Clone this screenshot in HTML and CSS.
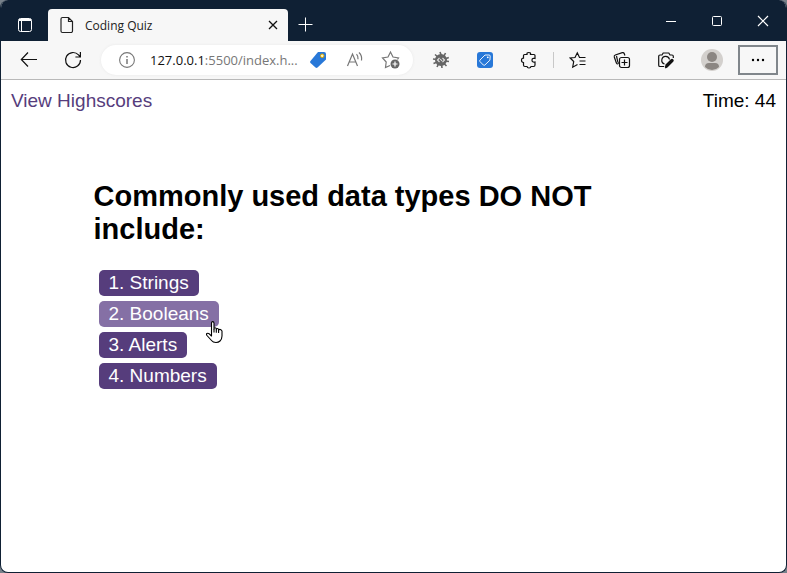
FILE: index.html
```html
<!DOCTYPE html>
<html lang="en">
<head>
<meta charset="utf-8">
<title>Coding Quiz</title>
<link rel="stylesheet" href="styles.css">
</head>
<body>
<div class="window">
  <header class="titlebar">
    <button class="workspace" aria-label="Tab actions">
      <svg width="16" height="16" viewBox="0 0 16 16" fill="none" stroke="#fff"><rect x="1.5" y="1.5" width="13" height="13" rx="2"/><path d="M2 3.5h12M2 2.500h12M4.500 4v10"/></svg>
    </button>
    <div class="tab">
      <svg width="14" height="18" viewBox="0 0 14 18" fill="none" stroke="#222" stroke-width="1.200"><path d="M2.500 1.500h6l4 4v9.500a1.500 1.500 0 0 1-1.500 1.500h-8.500a1.500 1.500 0 0 1-1.500-1.500v-12a1.500 1.500 0 0 1 1.500-1.500zM8.500 1.500v4h4"/></svg>
      <span class="tab-title">Coding Quiz</span>
      <button class="tab-close" aria-label="Close tab">
        <svg width="10" height="10" viewBox="0 0 10 10" stroke="#111" stroke-width="1.300"><path d="M1 1l8 8M9 1l-8 8"/></svg>
      </button>
    </div>
    <button class="new-tab" aria-label="New tab">
      <svg width="16" height="16" viewBox="0 0 16 16" stroke="#fff"><path d="M7.500 0.500v14M0.500 7.500h14"/></svg>
    </button>
    <div class="window-controls">
      <button aria-label="Minimize"><svg width="12" height="12" viewBox="0 0 12 12" stroke="#fff"><path d="M1 6.500h10"/></svg></button>
      <button aria-label="Maximize"><svg width="12" height="12" viewBox="0 0 12 12" fill="none" stroke="#fff"><rect x="1.500" y="1.500" width="9" height="9" rx="1"/></svg></button>
      <button aria-label="Close"><svg width="12" height="12" viewBox="0 0 12 12" stroke="#fff" stroke-width="1.200"><path d="M1 1l10 10M11 1l-10 10"/></svg></button>
    </div>
  </header>

  <nav class="toolbar">
    <button class="tool" aria-label="Back"><svg width="20" height="20" viewBox="0 0 20 20" fill="none" stroke="#111" stroke-width="1.200"><path d="M18 9.500H2.500M9 2.500L2.300 9.500L9 16.500"/></svg></button>
    <button class="tool" aria-label="Refresh"><svg width="20" height="20" viewBox="0 0 20 20" fill="none" stroke="#111" stroke-width="1.200"><path d="M17.500 10a7.500 7.500 0 1 1-2-5.100l1.500 1.600M17.400 2v5h-5"/></svg></button>
    <div class="address">
      <svg class="info" width="18" height="18" viewBox="0 0 18 18" fill="none" stroke="#777" stroke-width="1.100"><circle cx="9" cy="9" r="7.400"/><path d="M9 8v5M9 5v1.500" stroke-width="1.500"/></svg>
      <span class="url"><b>127.0.0.1</b>:5500/index.h...</span>
      <button class="tool address-tool" aria-label="Shopping"><svg width="18" height="18" viewBox="1 0 18 18"><path d="M10 1h6a2 2 0 0 1 2 2v5.500l-8.500 8q-1 .8-2 0L2.500 12q-.8-1 0-2z" fill="#2878d8" transform="translate(-1)"/><circle cx="13.200" cy="4.800" r="1.800" fill="#fff4bb" stroke="#d9a300"/></svg></button>
      <button class="tool address-tool" aria-label="Read aloud"><svg width="18" height="18" viewBox="0 0 18 18" fill="none" stroke="#777" stroke-width="1.200"><path d="M1.500 15L6.500 3l5 12M3.300 11h6.500M10.500 3.200q1.800 1.800 1.500 5M13 1.500q3.300 3.200 2.500 8"/></svg></button>
      <button class="tool address-tool" aria-label="Add to favorites"><svg width="20" height="20" viewBox="0 0 20 20" fill="none" stroke="#777" stroke-width="1.200"><path d="M9 15.500L4.500 17.500 5.200 12 1.500 8 7 7l2.500-5L12 7l5.500 1-1 1.500"/><circle cx="14" cy="14" r="4.500" fill="#666" stroke="none"/><path d="M14 11.500v5M11.500 14h5" stroke="#fff"/></svg></button>
    </div>
    <button class="tool" aria-label="Extension options"><svg width="18" height="18" viewBox="0 0 18 18"><circle cx="9" cy="9" r="6" fill="#666"/><path d="M8 1l1.500 4M13.500 2l-2 4M16.800 6.500l-4 1.500M17 10.500l-4-.5M14.500 15l-3-3M10 17l-.5-4M5 16l2-4M1.500 12.500l4-1.500M1 8l4 .5M3 3.500l3.500 3" stroke="#666" stroke-width="1.600"/><path d="M7.500 7L5.500 9l2 2M10.500 7l2 2-2 2M8.200 8l1.800 2" fill="none" stroke="#e4e4e4" stroke-width="1.100"/></svg></button>
    <button class="tool" aria-label="Coupons"><svg width="16" height="16" viewBox="0 0 16 16" fill="none"><rect width="16" height="16" rx="3" fill="#2878d8"/><path d="M8 3h4q1.300 0 1.200 1.200l-.3 4-5 4.800q-.8.7-1.600 0L3 9.600q-.7-.8 0-1.600z" stroke="#fff" stroke-width=".9"/><circle cx="10.800" cy="5.300" r=".9" fill="#fff"/></svg></button>
    <button class="tool" aria-label="Extensions"><svg width="18" height="18" viewBox="0 0 18 18" fill="none" stroke="#111" stroke-width="1.200"><path d="M4.500 3.500H7Q6.500 1.500 8.800 1.500T10.500 3.500H14q1 0 1 1V7.500Q12 6.800 12 9.200T15 11v3q0 1.500-1.500 1.500H11Q10.800 17 9 17T7 15.500H5q-1.500 0-1.500-1.500V11.500Q1.500 11.500 1.500 9.300T3.500 7.200V4.500q0-1 1-1z"/></svg></button>
    <span class="divider"></span>
    <button class="tool" aria-label="Favorites"><svg width="18" height="18" viewBox="0 0 18 18" fill="none" stroke="#111" stroke-width="1.200"><path d="M16.500 6.500H10.500L8.300 1.800 6 6.500l-4.800.5 3.500 3.500-1 5.700L8.500 13.500M10.500 10h6M10.500 13.500h6"/></svg></button>
    <button class="tool" aria-label="Collections"><svg width="18" height="18" viewBox="0 0 18 18" fill="none" stroke="#111" stroke-width="1.200"><path d="M5 13q-1.300 0-1.700-1.300L1.300 6q-.4-1.500 1-2l7-2.300q1.500-.4 2 1l.6 1.800"/><path d="M6.500 13q-1.500-1-1.800-2.500L3.500 5"/><rect x="6.500" y="6.500" width="10" height="10" rx="2" fill="#f7f7f7"/><path d="M11.500 8.500v6M8.500 11.500h6"/></svg></button>
    <button class="tool" aria-label="Web capture"><svg width="18" height="18" viewBox="0 0 18 18" fill="none" stroke="#111" stroke-width="1.200"><path d="M7 15.500H3q-1.300 0-1.300-1.300V5.300Q1.700 4 3 4h2l1.200-2h5.600L13 4h2q1.300 0 1.300 1.300V7"/><path d="M7.500 13a3.900 3.900 0 1 1 5-4.500"/><path d="M10 14.500l5-5" stroke-width="3.400" stroke-linecap="round"/><path d="M8 16.500l2-1" stroke-width="2"/></svg></button>
    <button class="tool profile" aria-label="Profile"><svg width="22" height="22" viewBox="0 0 22 22"><circle cx="11" cy="11" r="11" fill="#d3d0cd"/><circle cx="11" cy="8" r="5" fill="#8b8682"/><path d="M4 18q0-4 4-4h6q4 0 4 4-3 3-7 3t-7-3z" fill="#8b8682"/></svg></button>
    <button class="tool menu" aria-label="Settings and more"><svg width="14" height="4" viewBox="0 0 14 4"><circle cx="2" cy="2" r="1.200"/><circle cx="7" cy="2" r="1.200"/><circle cx="12" cy="2" r="1.200"/></svg></button>
  </nav>

  <main class="page">
    <div class="page-top"><a href="#highscores">View Highscores</a><span>Time: 44</span></div>
    <section class="quiz">
      <h1>Commonly used data types DO NOT include:</h1>
      <div class="choices">
        <button class="choice">1. Strings</button>
        <button class="choice active">2. Booleans
          <svg class="pointer" width="17" height="23" viewBox="0 0 17 23" fill="#fff" stroke="#000" stroke-width="1.100" stroke-linejoin="round"><path d="M5.500 13.500V2.200q0-1.600 1.200-1.600T8 2.200V8q0-1.300 1.100-1.300T10.300 8v.8q0-1.300 1.100-1.300t1.200 1.300v.8q0-1.200 1.200-1.200T16 10v5q0 3-2 5-1.500 1.500-4 1.500-3 0-4.500-2L1 14.500q-1-1.500 0-2 1-.5 2.200.3l2.300 2.200z"/><path d="M8 8v3.500M10.300 8.800v3M12.600 9.600v2.500" fill="none"/></svg>
        </button>
        <button class="choice">3. Alerts</button>
        <button class="choice">4. Numbers</button>
      </div>
    </section>
  </main>
</div>
</body>
</html>
```

FILE: styles.css
```css
* { box-sizing: border-box; }

body {
  margin: 0;
  background: #77818a;
  font-family: "Liberation Sans", Arial, sans-serif;
}

button {
  border: 0;
  padding: 0;
  background: none;
  font: inherit;
}

svg { display: block; flex-shrink: 0; }

.window {
  display: flex;
  flex-direction: column;
  min-height: 100vh;
  border: 1px solid #0f2034;
  border-top: 0;
  border-radius: 8px;
  overflow: hidden;
  background: #fff;
}

.titlebar {
  display: flex;
  align-items: flex-end;
  height: 41px;
  background: #0f2034;
}

.titlebar button {
  display: flex;
  align-items: center;
  justify-content: center;
}

.titlebar .workspace { width: 47px; height: 32px; }

.tab {
  display: flex;
  align-items: center;
  gap: 11px;
  flex: 0 1 240px;
  height: 32px;
  padding: 0 10px 0 12px;
  border-radius: 4px 4px 0 0;
  background: #f7f7f7;
}

.tab-title {
  flex: 1;
  font: 12px "Open Sans", sans-serif;
  color: #222;
}

.tab-close { height: 20px; }

.titlebar .new-tab { width: 36px; height: 32px; }

.window-controls {
  display: flex;
  align-self: stretch;
  margin-left: auto;
}

.window-controls button { width: 46px; }

.toolbar {
  display: flex;
  align-items: center;
  height: 39px;
  padding: 0 8px 0 6px;
  border-bottom: 1px solid #b9b9b9;
  background: #f7f7f7;
}

.tool {
  display: flex;
  align-items: center;
  justify-content: center;
  flex: 0 0 44px;
  height: 30px;
}

.address {
  display: flex;
  align-items: center;
  flex: 1;
  min-width: 0;
  height: 30px;
  margin: 0 6px;
  padding: 0 4px 0 17px;
  border-radius: 15px;
  background: #fff;
  box-shadow: 0 0 3px #e8e8e8;
}

.url {
  flex: 1;
  min-width: 0;
  margin-left: 14px;
  white-space: nowrap;
  font: 13px "Open Sans", sans-serif;
  color: #777;
}

.url b { font-weight: 400; color: #111; }

.address-tool { flex-basis: 36px; }

.divider {
  width: 1px;
  height: 16px;
  margin: 0 2px;
  background: #c8c8c8;
}

.profile { margin: 0 4px 0 2px; }

.tool.menu {
  flex-basis: 40px;
  border: 2px solid #80868b;
}

.page { flex: 1; font-size: 19px; line-height: 22px; }

.page-top {
  display: flex;
  justify-content: space-between;
  padding: 10px;
}

.page-top a { color: #563d7c; text-decoration: none; }

.quiz {
  max-width: 600px;
  margin: 58px auto 0;
}

.quiz h1 {
  margin: 0 0 24px;
  font-size: 29px;
  line-height: 33px;
}

.choices {
  display: flex;
  flex-direction: column;
  align-items: flex-start;
  gap: 5px;
  padding-left: 5px;
}

.choice {
  position: relative;
  height: 26px;
  padding: 0 10px;
  border-radius: 5px;
  background: #563d7c;
  color: #fff;
}

.choice.active { background: #8570a5; }

.pointer {
  position: absolute;
  right: -4px;
  bottom: -17px;
}
```
